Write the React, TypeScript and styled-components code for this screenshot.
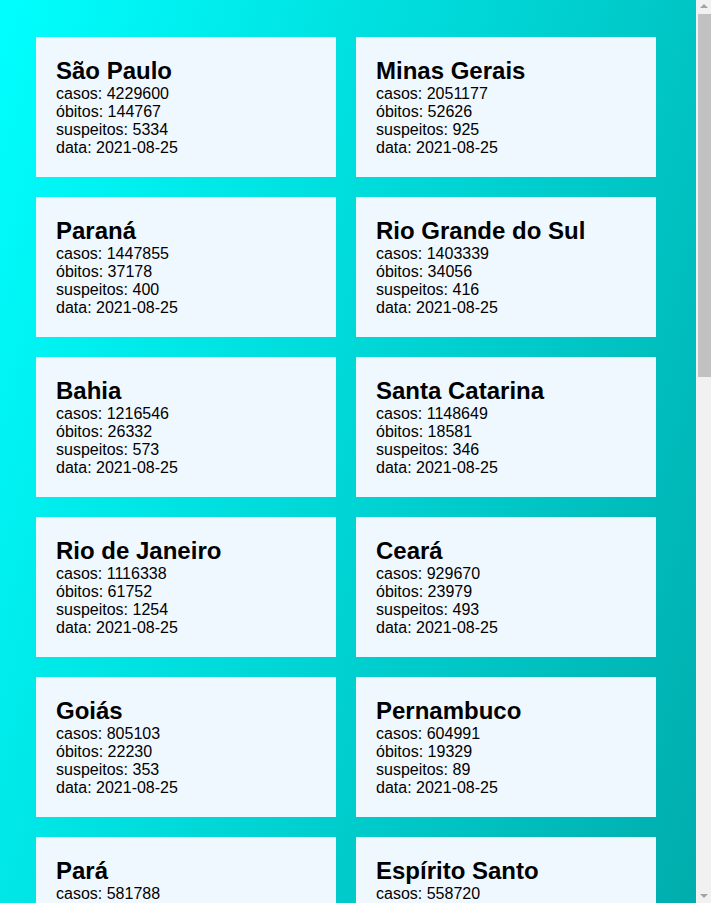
import React from "react";
import styled, { createGlobalStyle } from "styled-components";

const GlobalStyle = createGlobalStyle`
  html {
    margin: 0;
    width: calc(100% - 15px);
  }
  body {
    margin: 8px;
    font-family: "Liberation Sans", Arial, sans-serif;
    color: #000;
    background: linear-gradient(to bottom right, #00ffff, #008b8b);
  }
`;

const Grid = styled.main`
  display: grid;
  grid-template-columns: repeat(2, 300px);
  gap: 20px;
  padding: 29px 0 57px 28px;
`;

const Card = styled.section`
  background: #f0f8ff;
  height: 140px;
  box-sizing: border-box;
  padding: 20px;
`;

const Title = styled.h2`
  margin: 0;
  font-size: 24px;
  font-weight: 700;
  line-height: normal;
`;

const Line = styled.p`
  margin: 0;
  font-size: 16px;
  line-height: normal;
`;

/* window scrollbar as seen in the screenshot */
const ScrollTrack = styled.div`
  position: fixed;
  top: 0;
  right: 0;
  width: 15px;
  height: 100vh;
  background: #f1f1f1;
  display: flex;
  flex-direction: column;
`;

const ArrowButton = styled.div<{ $down?: boolean }>`
  height: 17px;
  flex: 0 0 17px;
  display: flex;
  justify-content: center;
  align-items: ${(p) => (p.$down ? "flex-end" : "flex-start")};
  padding: ${(p) => (p.$down ? "0 0 5px" : "4px 0 0")};
  box-sizing: border-box;

  &::before {
    content: "";
    width: 0;
    height: 0;
    border-left: 4px solid transparent;
    border-right: 4px solid transparent;
    ${(p) =>
      p.$down
        ? "border-top: 4px solid #a3a3a3;"
        : "border-bottom: 4px solid #a3a3a3;"}
  }
`;

const Thumb = styled.div`
  height: 363px;
  flex: 0 0 363px;
  margin: -3px 0 0 2px;
  background: #c1c1c1;
`;

const Spacer = styled.div`
  flex: 1;
`;

type State = { uf: string; casos: number; obitos: number; suspeitos: number };

const states: State[] = [
  { uf: "São Paulo", casos: 4229600, obitos: 144767, suspeitos: 5334 },
  { uf: "Minas Gerais", casos: 2051177, obitos: 52626, suspeitos: 925 },
  { uf: "Paraná", casos: 1447855, obitos: 37178, suspeitos: 400 },
  { uf: "Rio Grande do Sul", casos: 1403339, obitos: 34056, suspeitos: 416 },
  { uf: "Bahia", casos: 1216546, obitos: 26332, suspeitos: 573 },
  { uf: "Santa Catarina", casos: 1148649, obitos: 18581, suspeitos: 346 },
  { uf: "Rio de Janeiro", casos: 1116338, obitos: 61752, suspeitos: 1254 },
  { uf: "Ceará", casos: 929670, obitos: 23979, suspeitos: 493 },
  { uf: "Goiás", casos: 805103, obitos: 22230, suspeitos: 353 },
  { uf: "Pernambuco", casos: 604991, obitos: 19329, suspeitos: 89 },
  { uf: "Pará", casos: 581788, obitos: 16436, suspeitos: 210 },
  { uf: "Espírito Santo", casos: 558720, obitos: 12048, suspeitos: 187 },
  { uf: "Mato Grosso", casos: 523617, obitos: 13291, suspeitos: 142 },
  { uf: "Distrito Federal", casos: 461930, obitos: 9811, suspeitos: 165 },
  { uf: "Amazonas", casos: 424583, obitos: 13643, suspeitos: 98 },
  { uf: "Mato Grosso do Sul", casos: 364478, obitos: 9368, suspeitos: 121 },
  { uf: "Paraíba", casos: 435071, obitos: 9171, suspeitos: 77 },
  { uf: "Rondônia", casos: 262167, obitos: 6465, suspeitos: 54 },
  { uf: "Rio Grande do Norte", casos: 362034, obitos: 7278, suspeitos: 66 },
  { uf: "Maranhão", casos: 347873, obitos: 9974, suspeitos: 83 },
  { uf: "Piauí", casos: 315152, obitos: 6966, suspeitos: 49 },
  { uf: "Sergipe", casos: 276436, obitos: 5986, suspeitos: 37 },
  { uf: "Tocantins", casos: 218197, obitos: 3650, suspeitos: 29 },
  { uf: "Alagoas", casos: 235099, obitos: 6090, suspeitos: 44 },
  { uf: "Amapá", casos: 122287, obitos: 1961, suspeitos: 12 },
  { uf: "Roraima", casos: 124137, obitos: 1940, suspeitos: 15 },
];

export default function App() {
  return (
    <>
      <GlobalStyle />
      <Grid>
        {states.map((s) => (
          <Card key={s.uf}>
            <Title>{s.uf}</Title>
            <Line>casos: {s.casos}</Line>
            <Line>óbitos: {s.obitos}</Line>
            <Line>suspeitos: {s.suspeitos}</Line>
            <Line>data: 2021-08-25</Line>
          </Card>
        ))}
      </Grid>
      <ScrollTrack aria-hidden>
        <ArrowButton />
        <Thumb />
        <Spacer />
        <ArrowButton $down />
      </ScrollTrack>
    </>
  );
}
